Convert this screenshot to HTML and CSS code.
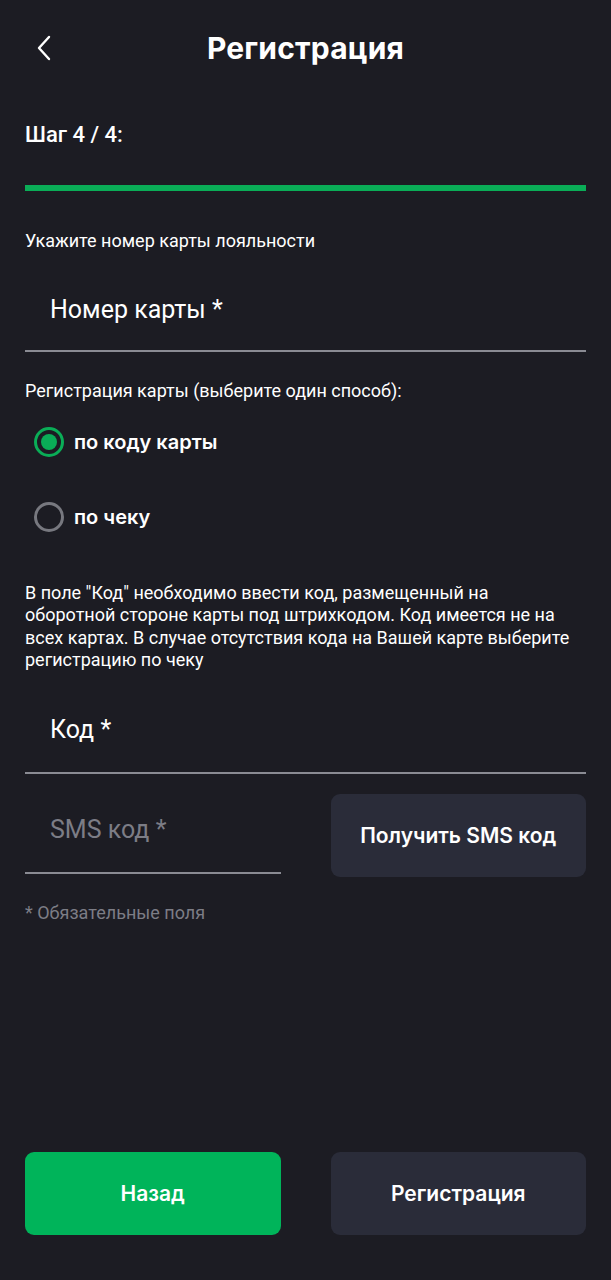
FILE: index.html
```html
<!DOCTYPE html>
<html lang="ru">
<head>
    <meta charset="UTF-8">
    <meta name="viewport" content="width=device-width, initial-scale=1.0">
    <title>Регистрация</title>
    <link rel="stylesheet" href="styles.css">
</head>
<body>

    <!-- Header -->
    <div class="header">
        <a class="back" href="#">
            <svg width="16" height="26" viewBox="0 0 16 26">
                <path d="M13 2 L3 13 L13 24" fill="none" stroke="#ffffff" stroke-width="2.4" stroke-linecap="round" stroke-linejoin="round"/>
            </svg>
        </a>
        <h1>Регистрация</h1>
        <span></span>
    </div>

    <!-- Main Content -->
    <div class="container">
        <div class="step">Шаг 4 / 4:</div>
        <div class="progress"><div class="progress-fill"></div></div>

        <p class="label">Укажите номер карты лояльности</p>
        <div class="field">
            <input type="text" placeholder="Номер карты *" class="white-ph">
        </div>

        <p class="label label-radio">Регистрация карты (выберите один способ):</p>
        <div class="radios">
            <label class="radio checked"><span class="dot"></span>по коду карты</label>
            <label class="radio"><span class="dot"></span>по чеку</label>
        </div>

        <p class="note">В поле "Код" необходимо ввести код, размещенный на<br>оборотной стороне карты под штрихкодом. Код имеется не на<br>всех картах. В случае отсутствия кода на Вашей карте выберите регистрацию по чеку</p>

        <div class="field field-code">
            <input type="text" placeholder="Код *" class="white-ph">
        </div>

        <div class="sms-row">
            <div class="field field-sms">
                <input type="text" placeholder="SMS код *">
            </div>
            <button class="btn btn-dark">Получить SMS код</button>
        </div>

        <p class="required">* Обязательные поля</p>
    </div>

    <!-- Footer buttons -->
    <div class="actions">
        <button class="btn btn-green btn-big">Назад</button>
        <button class="btn btn-dark btn-big">Регистрация</button>
    </div>

</body>
</html>
```

FILE: styles.css
```css
/* General Styles */
* {
    margin: 0;
    padding: 0;
    box-sizing: border-box;
    font-family: Roboto, "Noto Sans", sans-serif;
}
body {
    background: #1c1c23;
    color: #ffffff;
    width: 611px;
    height: 1280px;
    position: relative;
}

/* Header */
.header {
    display: grid;
    grid-template-columns: 1fr auto 1fr;
    align-items: center;
    height: 96px;
    padding: 0 25px;
}
.back {
    display: flex;
    align-items: center;
    padding-left: 11px;
}
.header h1 {
    font-family: Inter, Roboto, sans-serif;
    font-size: 30px;
    font-weight: 700;
    letter-spacing: 0.2px;
}

/* Container */
.container {
    padding: 0 25px;
}
.step {
    font-size: 22px;
    font-weight: 500;
    margin-top: 27px;
    line-height: 24px;
}
.progress {
    margin-top: 38px;
    height: 6px;
    background: #2a2c39;
}
.progress-fill {
    width: 100%;
    height: 100%;
    background: #0aad57;
}

/* Labels & text */
.label {
    font-size: 18px;
    line-height: 22px;
    margin-top: 39px;
}
.label-radio {
    margin-top: 28px;
}
.note {
    font-size: 18px;
    line-height: 22.4px;
    margin-top: 50px;
}
.required {
    font-size: 18px;
    color: #7c7d86;
    margin-top: 25px;
}

/* Inputs */
.field {
    border-bottom: 2px solid #8a8b93;
}
.field input {
    width: 100%;
    height: 98px;
    padding: 16px 25px 0;
    background: transparent;
    border: none;
    outline: none;
    font-size: 25px;
    color: #ffffff;
}
.field input::placeholder {
    color: #7c7d86;
}
.field input.white-ph::placeholder {
    color: #ffffff;
}
.field-code input {
    height: 100px;
}

/* Radios */
.radios {
    display: flex;
    flex-direction: column;
    gap: 45px;
    margin-top: 25px;
    padding-left: 9px;
}
.radio {
    display: flex;
    align-items: center;
    gap: 10px;
    height: 30px;
    font-family: Inter, Roboto, sans-serif;
    font-size: 20px;
    font-weight: 600;
}
.dot {
    width: 30px;
    height: 30px;
    border-radius: 50%;
    border: 3px solid #77787f;
    display: flex;
    align-items: center;
    justify-content: center;
}
.radio.checked .dot {
    border-color: #0aad57;
}
.radio.checked .dot::after {
    content: "";
    width: 16px;
    height: 16px;
    border-radius: 50%;
    background: #0aad57;
}

/* SMS row */
.sms-row {
    display: grid;
    grid-template-columns: 1fr 1fr;
    gap: 50px;
    align-items: start;
    margin-top: 20px;
}
.field-sms input {
    height: 78px;
    padding: 0 25px 6px;
}

/* Buttons */
.btn {
    height: 83px;
    border: none;
    border-radius: 9px;
    color: #ffffff;
    font-family: Inter, Roboto, sans-serif;
    font-size: 21px;
    font-weight: 600;
    cursor: pointer;
}
.btn-dark {
    background: #2a2c39;
}
.btn-green {
    background: #00b45a;
}
.actions {
    position: absolute;
    left: 25px;
    right: 25px;
    top: 1152px;
    display: grid;
    grid-template-columns: 1fr 1fr;
    gap: 50px;
}
```
